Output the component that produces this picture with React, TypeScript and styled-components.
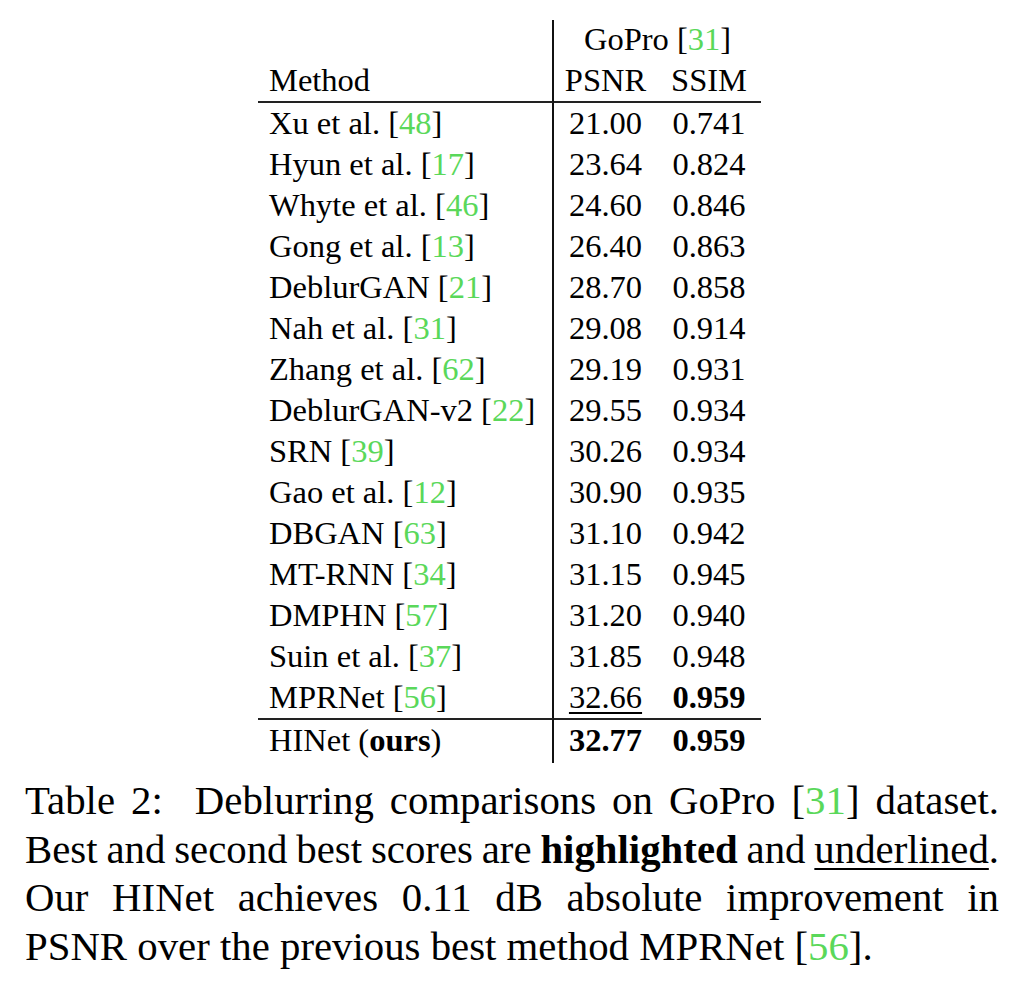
import React from "react";
import styled, { createGlobalStyle } from "styled-components";

const GlobalStyle = createGlobalStyle`
  html, body { margin: 0; padding: 0; background: #fff; }
  body {
    font-family: "Liberation Serif", "Times New Roman", serif;
    color: #000;
  }
`;

const Page = styled.main`
  width: 974px;
  padding: 20px 0 0 25px;
  display: flex;
  flex-direction: column;
`;

const TableWrap = styled.div`
  display: flex;
  justify-content: center;
  padding-right: 5px;
`;

const Table = styled.table`
  border-collapse: separate;
  border-spacing: 0;
  table-layout: fixed;
  width: 503px;
  font-size: 32.5px;
`;

const Col = styled.col<{ $w: number }>`
  width: ${(p) => p.$w}px;
`;

const Cell = styled.td`
  padding: 0;
  line-height: 41px;
  white-space: nowrap;
  text-align: center;
`;

const MethodCell = styled(Cell)`
  text-align: left;
  padding-left: 11px;
  border-right: 2px solid #111;
`;

const TopRow = styled.tr`
  & > td {
    line-height: 38.5px;
  }
`;

const HeadRow = styled.tr`
  & > td {
    line-height: 42px;
    border-bottom: 2px solid #222;
  }
`;

const BodyRow = styled.tr``;

const FinalRow = styled.tr`
  & > td {
    border-top: 2px solid #222;
    padding-bottom: 2px;
  }
`;

const Cite = styled.span`
  color: #5ad85a;
`;

const Score = styled.span<{ $bold?: boolean; $under?: boolean }>`
  font-weight: ${(p) => (p.$bold ? 700 : 400)};
  text-decoration: ${(p) => (p.$under ? "underline" : "none")};
  text-decoration-thickness: 1.5px;
  text-underline-offset: 4px;
`;

const Bold = styled.b`
  font-weight: 700;
`;

const Caption = styled.p`
  margin: 14.5px 0 0;
  font-size: 40.8px;
  line-height: 48.7px;
  text-align: justify;
`;

const Tight = styled.span`
  word-spacing: -2px;
`;

const Under = styled.span`
  text-decoration: underline;
  text-decoration-thickness: 1.5px;
  text-underline-offset: 5px;
`;

type Row = {
  name: string;
  cite: string;
  psnr: string;
  ssim: string;
  psnrUnder?: boolean;
  ssimBold?: boolean;
};

const rows: Row[] = [
  { name: "Xu et al.", cite: "48", psnr: "21.00", ssim: "0.741" },
  { name: "Hyun et al.", cite: "17", psnr: "23.64", ssim: "0.824" },
  { name: "Whyte et al.", cite: "46", psnr: "24.60", ssim: "0.846" },
  { name: "Gong et al.", cite: "13", psnr: "26.40", ssim: "0.863" },
  { name: "DeblurGAN", cite: "21", psnr: "28.70", ssim: "0.858" },
  { name: "Nah et al.", cite: "31", psnr: "29.08", ssim: "0.914" },
  { name: "Zhang et al.", cite: "62", psnr: "29.19", ssim: "0.931" },
  { name: "DeblurGAN-v2", cite: "22", psnr: "29.55", ssim: "0.934" },
  { name: "SRN", cite: "39", psnr: "30.26", ssim: "0.934" },
  { name: "Gao et al.", cite: "12", psnr: "30.90", ssim: "0.935" },
  { name: "DBGAN", cite: "63", psnr: "31.10", ssim: "0.942" },
  { name: "MT-RNN", cite: "34", psnr: "31.15", ssim: "0.945" },
  { name: "DMPHN", cite: "57", psnr: "31.20", ssim: "0.940" },
  { name: "Suin et al.", cite: "37", psnr: "31.85", ssim: "0.948" },
  { name: "MPRNet", cite: "56", psnr: "32.66", ssim: "0.959", psnrUnder: true, ssimBold: true },
];

export default function App() {
  return (
    <>
      <GlobalStyle />
      <Page>
        <TableWrap>
          <Table>
            <colgroup>
              <Col $w={296} />
              <Col $w={103} />
              <Col $w={104} />
            </colgroup>
            <tbody>
              <TopRow>
                <MethodCell />
                <Cell colSpan={2}>
                  GoPro [<Cite>31</Cite>]
                </Cell>
              </TopRow>
              <HeadRow>
                <MethodCell>Method</MethodCell>
                <Cell>PSNR</Cell>
                <Cell>SSIM</Cell>
              </HeadRow>
              {rows.map((r) => (
                <BodyRow key={r.name}>
                  <MethodCell>
                    {r.name} [<Cite>{r.cite}</Cite>]
                  </MethodCell>
                  <Cell>
                    <Score $under={r.psnrUnder}>{r.psnr}</Score>
                  </Cell>
                  <Cell>
                    <Score $bold={r.ssimBold}>{r.ssim}</Score>
                  </Cell>
                </BodyRow>
              ))}
              <FinalRow>
                <MethodCell>
                  HINet (<Bold>ours</Bold>)
                </MethodCell>
                <Cell>
                  <Score $bold>32.77</Score>
                </Cell>
                <Cell>
                  <Score $bold>0.959</Score>
                </Cell>
              </FinalRow>
            </tbody>
          </Table>
        </TableWrap>
        <Caption>
          Table 2:&nbsp; Deblurring comparisons on GoPro [<Cite>31</Cite>] dataset.{" "}
          <Tight>
            Best and second best scores are <Bold>highlighted</Bold> and{" "}
            <Under>underlined</Under>.
          </Tight>{" "}
          Our HINet achieves 0.11 dB absolute improvement in PSNR over the previous best
          method MPRNet [<Cite>56</Cite>].
        </Caption>
      </Page>
    </>
  );
}
